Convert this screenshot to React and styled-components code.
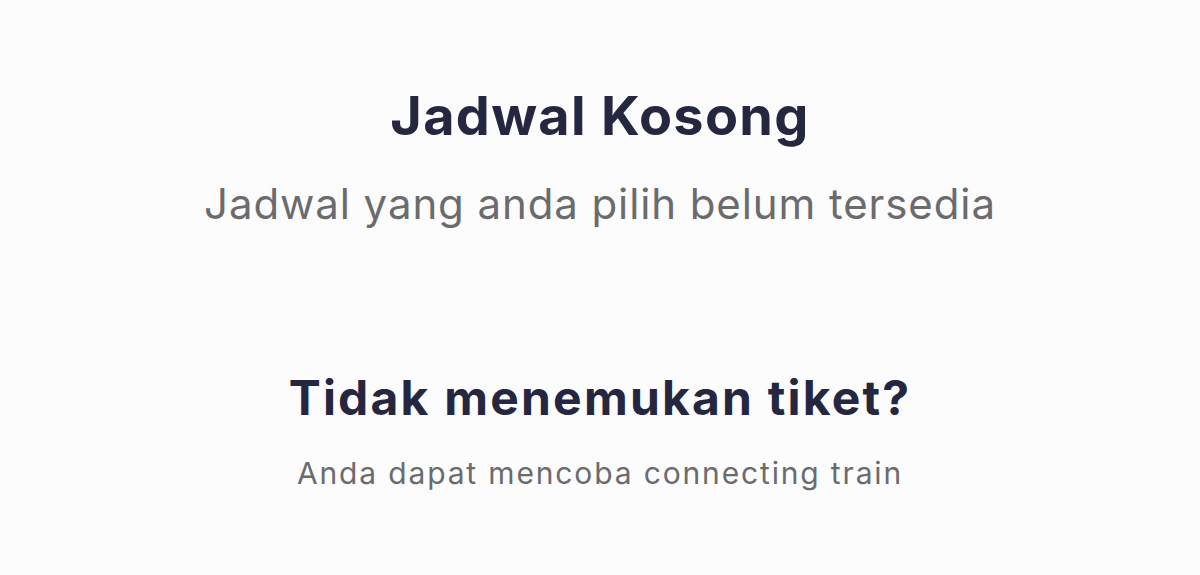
import React from "react";
import styled, { createGlobalStyle } from "styled-components";

const GlobalStyle = createGlobalStyle`
  html, body {
    margin: 0;
    padding: 0;
    background: #fcfcfd;
  }
  body {
    font-family: "Inter", "Noto Sans", sans-serif;
  }
`;

const Page = styled.main`
  width: 1200px;
  height: 575px;
  display: flex;
  flex-direction: column;
  align-items: center;
  padding-top: 84px;
  box-sizing: border-box;
  background: #fcfcfd;
`;

const Block = styled.section`
  display: flex;
  flex-direction: column;
  align-items: center;
  gap: ${(p) => p.gap}px;
  margin-bottom: ${(p) => p.after || 0}px;
`;

const Title = styled.h1`
  margin: 0;
  font-size: ${(p) => p.size}px;
  line-height: 1.2;
  font-weight: 700;
  color: #24273f;
  letter-spacing: ${(p) => p.spacing}px;
`;

const Caption = styled.p`
  margin: 0;
  font-size: ${(p) => p.size}px;
  line-height: 1.2;
  font-weight: 400;
  color: #6b6b6e;
  letter-spacing: ${(p) => p.spacing}px;
`;

export default function App() {
  return (
    <>
      <GlobalStyle />
      <Page>
        <Block gap={30} after={140}>
          <Title size={54} spacing={1.3}>Jadwal Kosong</Title>
          <Caption size={42} spacing={0.9}>Jadwal yang anda pilih belum tersedia</Caption>
        </Block>
        <Block gap={28}>
          <Title size={48} spacing={2.2}>Tidak menemukan tiket?</Title>
          <Caption size={30} spacing={1.85}>Anda dapat mencoba connecting train</Caption>
        </Block>
      </Page>
    </>
  );
}
